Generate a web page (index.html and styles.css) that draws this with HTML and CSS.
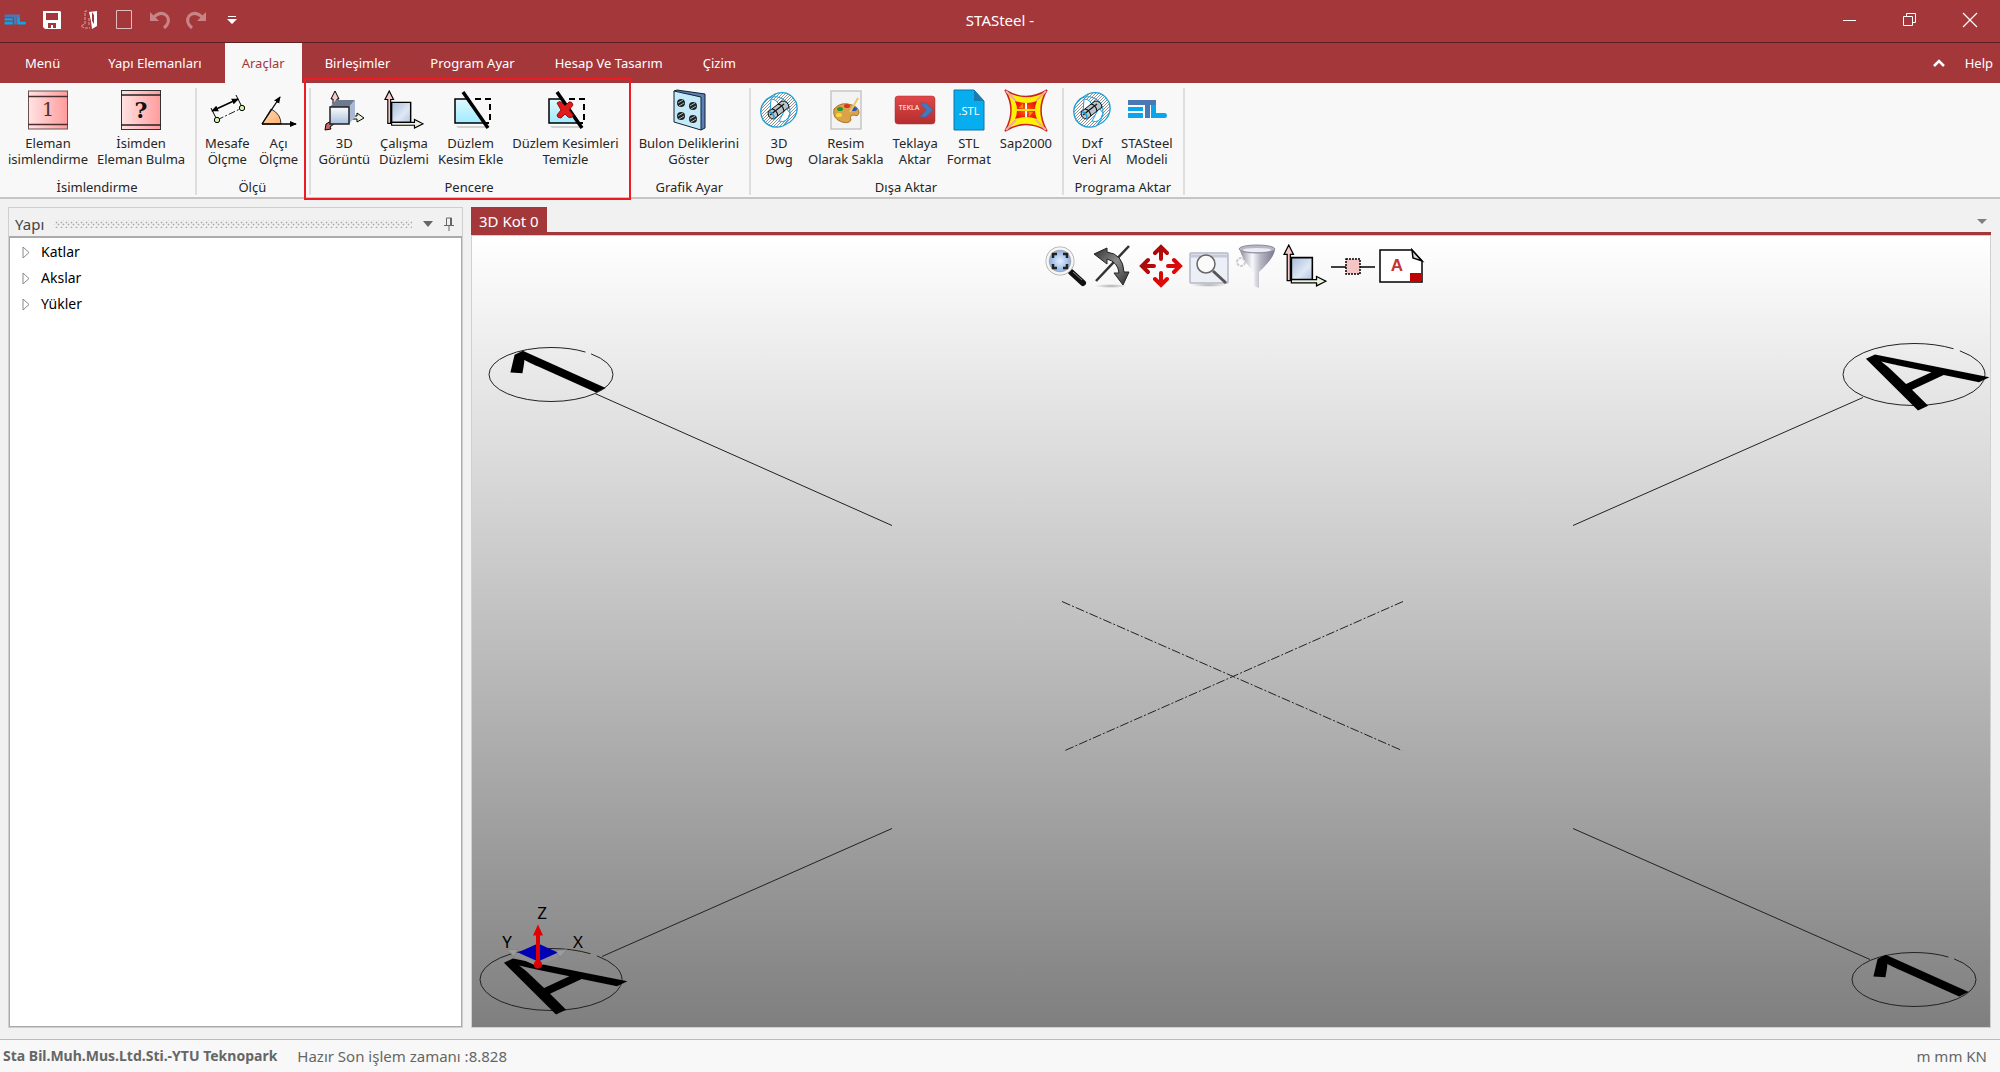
FILE: index.html
```html
<!DOCTYPE html>
<html lang="tr">
<head>
  <meta charset="UTF-8" />
  <meta name="viewport" content="width=device-width, initial-scale=1.0" />
  <title>STASteel</title>
  <link rel="stylesheet" href="styles.css">
</head>
<body>

  <!-- Shared icon shapes -->
  <svg class="defs" width="0" height="0" aria-hidden="true">
    <defs>
      <linearGradient id="pink" x1="0" x2="1"><stop offset="0" stop-color="#ffe3e3" /><stop offset="1" stop-color="#ff9c9c" /></linearGradient>
      <linearGradient id="steel" x1="0" y1="0" x2="1" y2="1"><stop offset="0" stop-color="#a9bcda" /><stop offset="0.6" stop-color="#dfe8f4" /><stop offset="1" stop-color="#b4c5df" /></linearGradient>
      <linearGradient id="face" x1="0" y1="0" x2="0" y2="1"><stop offset="0" stop-color="#fafcff" /><stop offset="1" stop-color="#a9bfdc" /></linearGradient>
      <linearGradient id="cyan" x1="0" y1="0" x2="0" y2="1"><stop offset="0" stop-color="#dff8ff" /><stop offset="1" stop-color="#a0ebff" /></linearGradient>
      <linearGradient id="orange" x1="0" y1="0" x2="1" y2="1"><stop offset="0" stop-color="#ffdcb8" /><stop offset="1" stop-color="#ffb070" /></linearGradient>
      <linearGradient id="tekla" x1="0" y1="0" x2="0" y2="1"><stop offset="0" stop-color="#e04848" /><stop offset="1" stop-color="#b52d2d" /></linearGradient>
      <linearGradient id="metal" x1="0" x2="1"><stop offset="0" stop-color="#8e8e9c" /><stop offset="0.35" stop-color="#f8f8fc" /><stop offset="0.6" stop-color="#b4b4c2" /><stop offset="1" stop-color="#77778a" /></linearGradient>
      <linearGradient id="dark" x1="0" y1="0" x2="1" y2="1"><stop offset="0" stop-color="#2c2c2c" /><stop offset="0.5" stop-color="#8c8c8c" /><stop offset="1" stop-color="#2c2c2c" /></linearGradient>
      <linearGradient id="move" x1="0" y1="0" x2="1" y2="1"><stop offset="0" stop-color="#8c0c0c" /><stop offset="1" stop-color="#ff0808" /></linearGradient>
      <radialGradient id="lens"><stop offset="0" stop-color="#e4efff" /><stop offset="1" stop-color="#7fa5dc" /></radialGradient>
      <radialGradient id="shadow"><stop offset="0" stop-color="#000" stop-opacity="0.3" /><stop offset="1" stop-color="#000" stop-opacity="0" /></radialGradient>
      <radialGradient id="sap"><stop offset="0" stop-color="#ff6a00" /><stop offset="1" stop-color="#f01414" /></radialGradient>
      <pattern id="hatch" width="3" height="3" patternUnits="userSpaceOnUse"><rect width="3" height="3" fill="#fff" /><path d="M0 3L3 0" stroke="#777" stroke-width="0.8" /></pattern>
      <marker id="tip" viewBox="0 0 8 8" refX="7" refY="4" markerWidth="7" markerHeight="7" markerUnits="userSpaceOnUse" orient="auto-start-reverse"><path d="M0 0.500L8 4L0 7.500z" /></marker>

      <symbol id="logo" viewBox="0 0 40 24">
        <path d="M1 2h28v5H1zM18 7h5v13h-5z" fill="#4a78b5" />
        <path d="M1 9h15v4H1zM1 15h15v5H1zM24 7h5v8h9q2 0 2 2.500t-2 2.500h-14z" fill="#0aa5ea" />
      </symbol>
      <symbol id="axes" viewBox="0 0 42 42">
        <path d="M8 13h20v21H8z" fill="url(#steel)" stroke="#000" stroke-width="1.500" />
        <path d="M4 35V10H1L5.500 1L10 10H7v25z" fill="#f7c9c9" stroke="#000" stroke-width="1.200" />
        <path d="M8 34h24v-3l9 4.500l-9 4.500v-3H8z" fill="#e9f5dc" stroke="#000" stroke-width="1.200" />
      </symbol>
      <symbol id="cut" viewBox="0 0 40 40">
        <path d="M5 36h29l2 2H7z" fill="#999" opacity="0.4" />
        <path d="M4 9h12l18 24H4z" fill="url(#cyan)" stroke="#000" stroke-width="1.500" />
        <path d="M24 9h15v24h-4" fill="none" stroke="#000" stroke-width="2" stroke-dasharray="6 4" />
        <path d="M12 2L37 38" stroke="#000" stroke-width="3.500" />
      </symbol>
      <symbol id="bolt" viewBox="0 0 40 40">
        <path d="M8 9L16 4Q30-1 37 12Q41 24 31 32L24 36Q12 40 4 30Q-2 18 8 9z" fill="url(#hatch)" stroke="#1a9fd8" stroke-width="1.300" />
        <path d="M8 9Q18 3 28 12Q36 24 24 36" fill="none" stroke="#1a9fd8" />
        <path d="M12 9q7 0 8 8l-9 6zM20 31q8 3 11-8l-4-5z" fill="#fff" stroke="#1a9fd8" />
        <path d="M9 22l14-11q6 0 7 6l-15 12q-6 0-6-7z" fill="#b9c4cc" stroke="#111" />
        <path d="M13 19q5 1 6 7M19 14q5 1 6 7M11 25l14-11" fill="none" stroke="#111" stroke-width="1.200" />
        <path d="M10 22q5 0 5 7" fill="none" stroke="#1a9fd8" stroke-width="1.500" />
      </symbol>
      <symbol id="hole" viewBox="0 0 10 10">
        <ellipse cx="5" cy="5" rx="4" ry="4" fill="#222" />
        <path d="M2 5l5-3M3 8l5-3" stroke="#9bb" />
      </symbol>
    </defs>
  </svg>

  <header class="titlebar">
    <div class="quick">
      <svg class="logo" width="22" height="14"><use href="#logo" /></svg>
      <button aria-label="Kaydet"><svg width="20" height="20"><path d="M1 1h17l1 1v17H3l-2-2z" fill="#fff" /><path d="M4 3h12v7H4zM6 13h8v5h-3v-3H9v3H6z" fill="#a4373a" /></svg></button>
      <button aria-label="Aç"><svg width="20" height="20"><path d="M11 2l8-1v15l-5 3l-1-8z" fill="#fff" /><path d="M9 1H7v13l-4 2l3 2h6M11 8v8" fill="none" stroke="#d9a5a6" stroke-dasharray="3 1" /><path d="M14 2v9l2 3v-9z" fill="#a4373a" /></svg></button>
      <button aria-label="Yeni"><svg width="18" height="20"><path d="M1.500 0.500h15v18h-15z" fill="none" stroke="#e3bcbd" /></svg></button>
      <button aria-label="Geri al"><svg width="22" height="20"><path d="M4 8Q12 0 18 6q4 6-3 12" fill="none" stroke="#c98486" stroke-width="3" /><path d="M1 2v9h9z" fill="#c98486" /></svg></button>
      <button aria-label="Yinele"><svg width="22" height="20"><path d="M18 8Q10 0 4 6q-4 6 3 12" fill="none" stroke="#c98486" stroke-width="3" /><path d="M21 2v9h-9z" fill="#c98486" /></svg></button>
      <button aria-label="Özelleştir"><svg width="10" height="10"><path d="M1 1h8v1H1zM0 4h10l-5 5z" fill="#fff" /></svg></button>
    </div>
    <div class="app-name">STASteel -</div>
    <div class="window-buttons">
      <button aria-label="Simge durumu"><svg width="14" height="14"><path d="M0 7.500h13" stroke="#fff" /></svg></button>
      <button aria-label="Geri yükle"><svg width="14" height="14"><path d="M0.500 3.500h9v9h-9zM3.500 3v-2.500h9v9H10" fill="none" stroke="#fff" /></svg></button>
      <button aria-label="Kapat"><svg width="14" height="14"><path d="M0 0l14 14M14 0L0 14" stroke="#fff" stroke-width="1.200" /></svg></button>
    </div>
  </header>

  <nav class="tabs">
    <button class="tab menu">Menü</button>
    <button class="tab">Yapı Elemanları</button>
    <button class="tab active">Araçlar</button>
    <button class="tab">Birleşimler</button>
    <button class="tab">Program Ayar</button>
    <button class="tab">Hesap Ve Tasarım</button>
    <button class="tab">Çizim</button>
    <div class="tabs-end">
      <button aria-label="Şeridi daralt"><svg width="12" height="8"><path d="M1 7l5-5l5 5" fill="none" stroke="#fff" stroke-width="2.500" /></svg></button>
      <a href="#help">Help</a>
    </div>
  </nav>

  <section class="ribbon">
    <div class="group">
      <div class="tools">
        <button class="tool">
          <svg viewBox="0 0 40 40"><rect x="0.500" y="1" width="39" height="38" fill="url(#pink)" stroke="#6b5050" /><path d="M0 6.500h40M0 34.500h40" stroke="#4b2f2f" stroke-width="1.500" /><text class="glyph-serif" x="20" y="26" font-size="19">1</text></svg>
          Eleman<br>isimlendirme
        </button>
        <button class="tool">
          <svg viewBox="0 0 40 40"><rect x="0.500" y="0.500" width="39" height="39" fill="url(#pink)" stroke="#333" /><path d="M0 5h40M0 35h40" stroke="#222" stroke-width="1.500" /><text class="glyph-serif strong" x="20" y="28" font-size="22">?</text></svg>
          İsimden<br>Eleman Bulma
        </button>
      </div>
      <div class="group-name">İsimlendirme</div>
    </div>

    <div class="group">
      <div class="tools">
        <button class="tool">
          <svg viewBox="0 0 40 40"><path d="M5 21L31 9" stroke="#000" stroke-width="1.500" marker-start="url(#tip)" marker-end="url(#tip)" /><path d="M4 18l6 12M29 5l6 12" stroke="#000" /><path d="M10 30l25-12" stroke="#222" stroke-dasharray="7 2 2 2" /><circle cx="10" cy="30" r="2.700" fill="#cdf5a8" stroke="#000" /><circle cx="35" cy="18" r="2.700" fill="#cdf5a8" stroke="#000" /></svg>
          Mesafe<br>Ölçme
        </button>
        <button class="tool">
          <svg viewBox="0 0 40 40"><path d="M3 34L12 19q10 5 10 15z" fill="url(#orange)" stroke="#333" /><path d="M3 34L21 7" stroke="#000" stroke-width="1.300" marker-end="url(#tip)" /><path d="M3 34h34" stroke="#000" stroke-width="1.300" marker-end="url(#tip)" /></svg>
          Açı<br>Ölçme
        </button>
      </div>
      <div class="group-name">Ölçü</div>
    </div>

    <div class="group marked">
      <div class="tools">
        <button class="tool">
          <svg viewBox="0 0 40 40"><path d="M9 14V9H7l4-8l4 8h-2v5z" fill="#f7c9c9" stroke="#000" /><path d="M29 26h4v-3l7 5l-7 4v-3h-6z" fill="#e9f5dc" stroke="#000" /><path d="M7 31l-5 3l-1 6l6-1l-1-2l5-4z" fill="#c96464" stroke="#000" /><path d="M6 17l6-7h19l-6 7z" fill="#6e7b8f" /><path d="M25 17l6-7v17l-6 7z" fill="#a9b9d4" /><path d="M6 17h19v17H6z" fill="url(#face)" stroke="#222" stroke-width="1.500" /></svg>
          3D<br>Görüntü
        </button>
        <button class="tool"><svg><use href="#axes" /></svg>Çalışma<br>Düzlemi</button>
        <button class="tool"><svg><use href="#cut" /></svg>Düzlem<br>Kesim Ekle</button>
        <button class="tool">
          <svg viewBox="0 0 40 40"><use href="#cut" /><path d="M12 13q3-3 5 0l3 3l4-4q3-1 4 3l-4 5l4 5q-1 4-5 2l-3-3l-4 4q-4 0-4-3l4-5z" fill="#e01b1b" stroke="#a30c0c" /></svg>
          Düzlem Kesimleri<br>Temizle
        </button>
      </div>
      <div class="group-name">Pencere</div>
    </div>

    <div class="group">
      <div class="tools">
        <button class="tool">
          <svg viewBox="0 0 40 40"><path d="M5 1l3-1l28 4v34l-4 2z" fill="#5b80b4" stroke="#123" /><path d="M5 1l27 6v33L5 32z" fill="#c4eafa" stroke="#123" /><use href="#hole" x="7" y="8" width="10" height="10" /><use href="#hole" x="19" y="11" width="10" height="10" /><use href="#hole" x="7" y="21" width="10" height="10" /><use href="#hole" x="19" y="24" width="10" height="10" /></svg>
          Bulon Deliklerini<br>Göster
        </button>
      </div>
      <div class="group-name">Grafik Ayar</div>
    </div>

    <div class="group">
      <div class="tools">
        <button class="tool"><svg><use href="#bolt" /></svg>3D<br>Dwg</button>
        <button class="tool">
          <svg viewBox="0 0 40 40"><rect x="5" y="1" width="30" height="38" fill="#f3f3f3" stroke="#c6c6c6" stroke-width="1.500" /><path d="M8 19q7-8 18-4q7 2 7 8q-1 4-5 2q-5 0-3 5q-2 4-9 2q-10-3-8-13z" fill="#dba24b" stroke="#a87528" /><ellipse cx="14" cy="19" rx="3" ry="2" fill="#1a9a32" /><ellipse cx="21" cy="16" rx="3" ry="2" fill="#d6361f" /><ellipse cx="28" cy="19" rx="3" ry="2" fill="#2456c8" /><ellipse cx="13" cy="25" rx="3" ry="2" fill="#f5dc30" /><path d="M32 8l-8 14" stroke="#e7c66c" stroke-width="2" /></svg>
          Resim<br>Olarak Sakla
        </button>
        <button class="tool">
          <svg viewBox="0 0 40 40"><rect x="0" y="6" width="40" height="28" rx="3" fill="url(#tekla)" stroke="#a33" stroke-width="0.500" /><text class="glyph" x="14" y="20" font-size="7">TEKLA</text><path d="M25 13h6l7 7l-7 7h-6l6-7z" fill="#4579be" stroke="#35619c" stroke-width="0.500" /></svg>
          Teklaya<br>Aktar
        </button>
        <button class="tool">
          <svg viewBox="0 0 40 40"><path d="M5 0h20l10 11v29H5z" fill="#06adef" stroke="#1274a8" /><path d="M25 0v11h10z" fill="#1c7cae" /><text class="glyph" x="20" y="25" font-size="11">.STL</text></svg>
          STL<br>Format
        </button>
        <button class="tool">
          <svg viewBox="0 0 40 40"><path d="M-1 0q21 13 42 0q-12 20 0 41q-21-13-42 0q12-21 0-41z" fill="#fff200" stroke="#c22" stroke-width="1.500" /><path d="M0 1l10 10M40 1L30 11M0 40l10-10M40 40L30 30" stroke="#f4a8a0" stroke-width="2" /><path d="M9 11q11 4 22 0q-4 9 0 18q-11-4-22 0q4-9 0-18z" fill="url(#sap)" /><path d="M20 13v14" stroke="#fff" stroke-width="2" /><path d="M9 20h22" stroke="#ffe000" stroke-width="2" /><path d="M13 18l4-5v5zM27 22l-4 5v-5z" fill="#ff8a00" /></svg>
          Sap2000
        </button>
      </div>
      <div class="group-name">Dışa Aktar</div>
    </div>

    <div class="group">
      <div class="tools">
        <button class="tool"><svg><use href="#bolt" /></svg>Dxf<br>Veri Al</button>
        <button class="tool"><svg><use href="#logo" /></svg>STASteel<br>Modeli</button>
      </div>
      <div class="group-name">Programa Aktar</div>
    </div>
  </section>

  <main class="workspace">
    <aside class="panel">
      <div class="panel-head">
        <h2>Yapı</h2>
        <div class="grip"></div>
        <button aria-label="Pencere konumu"><svg width="12" height="6"><path d="M1 0h10l-5 6z" fill="#666" /></svg></button>
        <button aria-label="Otomatik gizle"><svg width="10" height="14"><path d="M2.500 8V1h5v7M0 8.500h10M5 9v5" fill="none" stroke="#666" /><path d="M6 1h2v7H6z" fill="#666" /></svg></button>
      </div>
      <ul class="tree">
        <li><button><svg width="8" height="13"><path d="M1 1L7 6.500L1 12z" fill="#fff" stroke="#888" /></svg>Katlar</button></li>
        <li><button><svg width="8" height="13"><path d="M1 1L7 6.500L1 12z" fill="#fff" stroke="#888" /></svg>Akslar</button></li>
        <li><button><svg width="8" height="13"><path d="M1 1L7 6.500L1 12z" fill="#fff" stroke="#888" /></svg>Yükler</button></li>
      </ul>
    </aside>

    <section class="document">
      <div class="doc-tabs">
        <button class="doc-tab">3D Kot 0</button>
        <button class="doc-list" aria-label="Belgeler"><svg width="10" height="6"><path d="M0 0h10l-5 5z" fill="#808080" /></svg></button>
      </div>
      <div class="viewport">
        <svg class="scene" viewBox="472 236 1518 790">
          <!-- axis lines -->
          <g class="axis">
            <path d="M595 393L892 525M1863 397L1573 525M602 956L892 828M1870 959L1573 828" />
            <path class="dash" d="M1062 601L1402 750M1403 601L1065 750" />
          </g>
          <!-- axis bubbles, open at the upper right -->
          <g class="bubble">
            <ellipse cx="551" cy="374" rx="62" ry="27" pathLength="100" />
            <ellipse cx="1914" cy="374" rx="71" ry="31" pathLength="100" />
            <ellipse cx="551" cy="979" rx="71" ry="31" pathLength="100" />
            <ellipse cx="1914" cy="979" rx="62" ry="27" pathLength="100" />
          </g>
          <!-- labels lying on the ground plane -->
          <g class="ground-label">
            <text transform="matrix(1.12 -0.520 1.162 0.521 566 406)">1</text>
            <text transform="matrix(1.12 -0.520 1.162 0.521 1918 410)">A</text>
            <text transform="matrix(1.12 -0.520 1.162 0.521 556 1014)">A</text>
            <text transform="matrix(1.12 -0.520 1.162 0.521 1929 1010)">1</text>
          </g>
          <!-- coordinate gizmo -->
          <path d="M538 943l20 9l-20 9l-20-9z" fill="#0000b4" />
          <path d="M538 964L514 953M538 964L560 954" stroke="#8f8f8f" stroke-width="4" />
          <path d="M507 949l11 0l-4 7zM567 949l-11 1l4 7z" fill="#9c9c9c" stroke="#777" stroke-width="0.500" />
          <path d="M538 964V932" stroke="#e00000" stroke-width="4" />
          <path d="M538 924l5 11h-10z" fill="#e00000" />
          <circle cx="538" cy="964" r="4" fill="#e00000" />
          <g class="gizmo-label">
            <text x="542" y="918">Z</text>
            <text x="507" y="947">Y</text>
            <text x="578" y="947">X</text>
          </g>
        </svg>

        <div class="view-tools">
          <button aria-label="Sığdır">
            <svg viewBox="0 0 44 44"><path d="M28 28l12 11" stroke="#111" stroke-width="6" stroke-linecap="round" /><path d="M30 28l9 8" stroke="#888" /><circle cx="17" cy="17" r="12.500" fill="url(#lens)" stroke="#aaa" stroke-width="4" /><circle cx="17" cy="17" r="12.500" fill="none" stroke="#f6f6f6" stroke-width="2.500" /><path d="M10 14v-4h4M20 10h4v4M24 20v4h-4M14 24h-4v-4" fill="none" stroke="#222" stroke-width="2.500" /></svg>
          </button>
          <button aria-label="Döndür">
            <svg viewBox="0 0 44 44"><ellipse cx="20" cy="42" rx="16" ry="2" fill="url(#shadow)" /><path d="M5 37L38 2" stroke="#333" stroke-width="2.500" /><path d="M3 10l13-6v4q16 2 17 20h5l-6 13l-9-12h5q-1-11-12-14v5z" fill="url(#dark)" stroke="#222" /></svg>
          </button>
          <button aria-label="Kaydır">
            <svg viewBox="0 0 44 44"><path d="M22 15V5M16 9l6-6l6 6M22 29v10M16 35l6 6l6-6M15 22H4M9 16l-6 6l6 6M29 22h11M35 16l6 6l-6 6" fill="none" stroke="url(#move)" stroke-width="4" stroke-linecap="round" /></svg>
          </button>
          <button aria-label="Pencere yakınlaştır">
            <svg viewBox="0 0 44 44"><ellipse cx="22" cy="41" rx="18" ry="2" fill="url(#shadow)" /><rect x="3" y="9" width="38" height="30" rx="1" fill="#eceff5" stroke="#b4b8c6" stroke-width="1.500" /><path d="M4 12h36" stroke="#c5cad8" stroke-width="3" /><circle cx="19" cy="20" r="9" fill="#fafafa" stroke="#666" stroke-width="1.500" /><path d="M26 27l13 12" stroke="#555" stroke-width="3" /></svg>
          </button>
          <button aria-label="Filtre">
            <svg viewBox="0 0 44 44"><circle cx="6" cy="18" r="4" fill="none" stroke="#ccc" stroke-width="2" stroke-dasharray="3 1" /><path d="M5 5q0 8 14 23v14l5 2V28Q40 13 40 5z" fill="url(#metal)" /><ellipse cx="22" cy="5" rx="18" ry="4" fill="#b7b7c4" stroke="#8a8a9a" /><ellipse cx="22" cy="6" rx="14" ry="2" fill="#ececf4" /></svg>
          </button>
          <button aria-label="Çalışma düzlemi"><svg><use href="#axes" /></svg></button>
          <button aria-label="Eleman">
            <svg viewBox="0 0 44 44"><path d="M0 23h44" stroke="#000" stroke-width="1.500" /><rect x="15" y="15" width="14" height="15" fill="#f5c4c4" stroke="#000" stroke-width="1.500" stroke-dasharray="2 1" /></svg>
          </button>
          <button aria-label="Pafta">
            <svg viewBox="0 0 44 44"><path d="M1 6h32l10 11v21H1z" fill="#fff" stroke="#000" stroke-width="1.500" /><path d="M33 6l1 8l9 3z" fill="#ddd" stroke="#000" stroke-width="1.500" /><path d="M31 29h11v8H31z" fill="#c00000" /><text class="sheet-letter" x="18" y="27" font-size="17">A</text></svg>
          </button>
        </div>
      </div>
    </section>
  </main>

  <footer class="status">
    <strong>Sta Bil.Muh.Mus.Ltd.Sti.-YTU Teknopark</strong>
    <span>Hazır Son işlem zamanı :8.828</span>
    <span class="units">m mm KN</span>
  </footer>

</body>
</html>
```

FILE: styles.css
```css
* {
  box-sizing: border-box;
}

body {
  margin: 0;
  height: 100vh;
  display: flex;
  flex-direction: column;
  background: #f1f1f1;
  color: #262626;
  font-family: "Noto Sans", "Open Sans", sans-serif;
  font-size: 13px;
  line-height: 16px;
}

button {
  padding: 0;
  border: none;
  background: none;
  color: inherit;
  font: inherit;
}

svg {
  display: block;
  overflow: visible;
}

.defs {
  position: absolute;
}

/* Title bar */
.titlebar {
  display: grid;
  grid-template-columns: 1fr auto 1fr;
  height: 43px;
  padding-bottom: 3px;
  background: #a4373a;
  border-bottom: 1px solid #5c2022;
  color: white;
}

.quick, .window-buttons {
  display: flex;
  align-items: center;
}

.logo {
  margin: 0 8px 0 4px;
}

.quick button {
  width: 36px;
  display: flex;
  justify-content: center;
}

.app-name {
  align-self: center;
  font-size: 15px;
}

.window-buttons {
  justify-content: flex-end;
}

.window-buttons button {
  width: 60px;
  display: flex;
  justify-content: center;
}

/* Ribbon tabs */
.tabs {
  display: flex;
  gap: 6px;
  height: 40px;
  background: #a4373a;
  color: white;
}

.tab {
  padding: 0 17px;
}

.tab.menu {
  padding: 0 25px;
}

.tab.active {
  background: #f8f8f8;
  color: #a4373a;
}

.tabs-end {
  display: flex;
  align-items: center;
  gap: 20px;
  margin-left: auto;
  padding-right: 7px;
}

.tabs-end a {
  color: white;
  text-decoration: none;
}

/* Ribbon */
.ribbon {
  display: flex;
  height: 116px;
  padding: 5px 0 2px;
  background: #f8f8f8;
  border-bottom: 2px solid #c8c4c4;
}

.group {
  position: relative;
  display: flex;
  flex-direction: column;
  justify-content: space-between;
  padding: 2px 5px 0 4px;
  border-right: 2px solid #dedede;
}

.tools {
  display: flex;
  align-items: flex-start;
}

.tool {
  padding: 0 5px 0 4px;
  text-align: center;
  white-space: nowrap;
}

.tool svg {
  width: 40px;
  height: 40px;
  margin: 0 auto 5px;
}

.group-name {
  text-align: center;
}

.marked::after {
  content: "";
  position: absolute;
  inset: -10px -2px -5px -7px;
  border: 2px solid #ed1c24;
}

.glyph-serif {
  font-family: "DejaVu Serif", serif;
  text-anchor: middle;
  fill: #4a3030;
}

.strong {
  font-weight: bold;
  fill: #111;
}

.glyph {
  text-anchor: middle;
  fill: white;
}

/* Work area */
.workspace {
  flex: 1;
  min-height: 0;
  display: flex;
  gap: 8px;
  padding: 8px 9px 11px 8px;
}

.panel {
  width: 455px;
  display: flex;
  flex-direction: column;
  border: 1px solid #cfcfcf;
}

.panel-head {
  display: flex;
  align-items: center;
  gap: 10px;
  height: 28px;
  padding: 3px 8px 0 6px;
  color: #444;
}

.panel-head h2 {
  margin: 0;
  font-size: 15px;
  font-weight: normal;
}

.grip {
  flex: 1;
  height: 8px;
  background-image: radial-gradient(#aaa 25%, transparent 30%), radial-gradient(#aaa 25%, transparent 30%);
  background-size: 5px 5px;
  background-position: 0 0, 2px 2px;
}

.tree {
  flex: 1;
  margin: 0;
  padding: 1px 12px;
  list-style: none;
  background: white;
  border: 1px solid #aaa;
  border-top-width: 2px;
  color: black;
  font-size: 14px;
}

.tree button {
  display: flex;
  align-items: center;
  gap: 11px;
  height: 26px;
}

.document {
  flex: 1;
  min-width: 0;
  display: flex;
  flex-direction: column;
}

.doc-tabs {
  display: flex;
  justify-content: space-between;
  border-bottom: 3px solid #a4373a;
}

.doc-tab {
  height: 25px;
  padding: 2px 8px 0;
  background: #a4373a;
  color: white;
  font-size: 15px;
}

.doc-list {
  padding: 4px 4px 0 0;
}

.viewport {
  position: relative;
  flex: 1;
  min-height: 0;
  border: 1px solid #d0d0d0;
  background: linear-gradient(#fff, #7f7f7f);
}

.scene {
  width: 100%;
  height: 100%;
}

.axis, .bubble {
  fill: none;
  stroke: #222;
  stroke-width: 1;
}

.bubble {
  stroke-dasharray: 87 2 11 0;
}

.dash {
  stroke-dasharray: 9 2 2 2;
}

.ground-label {
  font-size: 100px;
}

.gizmo-label {
  font-size: 17px;
  text-anchor: middle;
}

.view-tools {
  position: absolute;
  top: 8px;
  left: 4px;
  right: 0;
  display: flex;
  justify-content: center;
  gap: 4px;
}

.view-tools svg {
  width: 44px;
  height: 44px;
}

.sheet-letter {
  font-family: "Liberation Sans", Arial, sans-serif;
  font-weight: bold;
  text-anchor: middle;
  fill: #c83232;
}

/* Status bar */
.status {
  display: flex;
  align-items: center;
  gap: 20px;
  height: 33px;
  padding: 0 13px 1px 3px;
  background: #f8f8f8;
  border-top: 1px solid #bbb;
  color: #666;
  font-size: 15px;
}

.status strong {
  font-size: 14px;
}

.units {
  margin-left: auto;
}
```
